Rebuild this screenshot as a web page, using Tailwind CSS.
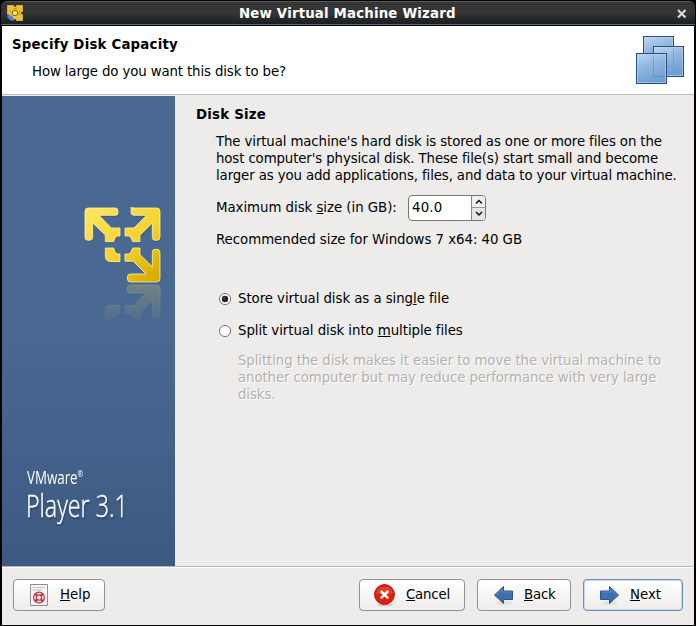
<!DOCTYPE html>
<html lang="en">
<head>
<meta charset="utf-8">
<title>New Virtual Machine Wizard</title>
<script src="https://cdn.jsdelivr.net/npm/@tailwindcss/browser@4"></script>
</head>
<body class="bg-black overflow-hidden">
<div class="w-[696px] h-[626px] bg-black flex flex-col font-['DejaVu_Sans',sans-serif] text-[13.33px] leading-[17px] text-black overflow-hidden whitespace-nowrap">
  <header class="h-[26px] shrink-0 mx-px border-t border-black pb-px">
    <div class="h-[24px] rounded-t-[6px] border-t border-t-[#585858] border-b border-b-[#536a7c] bg-linear-to-b from-[#353535] from-50% to-[#1b1d20] flex items-center pl-[6px] pr-[8px]">
      <svg class="w-4 h-4 shrink-0" viewBox="0 0 16 16">
        <path d="M.5 7h7v8.500h-4l-3-3z" fill="#4e83bd"/>
        <path d="M.5.5h6v1.500h3v-1.500h6v6h-1.500v3h1.500v6h-6v-1.500h-2l-1-2-3-2-1.500-1h-1.500z" fill="#f0c425" stroke="#ffe56b" stroke-width=".5"/>
        <path d="M2.500 5.500l2 2M6 2.500l1.500 1.500h1L10 2.500M13.500 6l-1.500 1.500v1l1.500 1.500" fill="none" stroke="#8f7422" stroke-width=".8"/>
        <rect x="5.500" y="5.500" width="5" height="5" rx="1.500" fill="#ffe458" stroke="#7d692b"/>
      </svg>
      <h1 class="text-white font-bold ml-[216px] tracking-[.18px]">New Virtual Machine Wizard</h1>
      <svg class="w-[10px] h-[10px] shrink-0 mt-[2px] ml-auto" viewBox="0 0 10 10"><path d="M1 1l7.500 7.500M8.500 1l-7.500 7.500" stroke="#d7d7d7" stroke-width="2.200"/></svg>
    </div>
  </header>
  <main class="ml-[2px] mr-[2px] h-[599px] bg-[#edeceb] flex flex-col">
    <section class="h-[69px] shrink-0 bg-white border-b border-[#bdbbb9] flex justify-between">
      <div class="pl-[10px] pt-[10px]">
        <h2 class="font-bold tracking-[.2px]">Specify Disk Capacity</h2>
        <p class="pl-5 pt-[10px] tracking-[-.13px]">How large do you want this disk to be?</p>
      </div>
      <svg class="w-[50px] h-[50px] mt-[9px] mr-[9px]" viewBox="0 0 50 50">
        <defs><linearGradient id="tile" x1="0" y1="0" x2=".35" y2="1"><stop stop-color="#c3d8f2"/><stop offset=".45" stop-color="#94b8e2"/><stop offset="1" stop-color="#709fd1"/></linearGradient></defs>
        <rect x="8.500" y="1.500" width="30" height="30" fill="url(#tile)" stroke="#294f80"/>
        <path d="M9.500 31V2.500h28v28h-28" fill="none" stroke="#bdd4ef" stroke-opacity=".6"/>
        <rect x="18.500" y="11.500" width="30" height="30" fill="url(#tile)" stroke="#294f80"/>
        <path d="M19.500 31.500h19v-19" fill="none" stroke="#6f98c8" stroke-opacity=".6"/>
        <path d="M19.500 12.500h28v28h-28z" fill="none" stroke="#bdd4ef" stroke-opacity=".6"/>
        <rect x="1.500" y="18.500" width="30" height="30" fill="url(#tile)" stroke="#294f80"/>
        <path d="M2.500 19.500h28v28h-28z" fill="none" stroke="#bdd4ef" stroke-opacity=".6"/>
        <path d="M18.500 20v21.500h12" fill="none" stroke="#5c89bd" stroke-opacity=".6"/>
      </svg>
    </section>
    <section class="h-[472px] shrink-0 pt-px border-b border-[#b9b7b5] flex">
      <aside class="w-[173px] h-[470px] shrink-0 bg-linear-to-b from-[#4a6992] from-50% to-[#3c5981] flex flex-col">
        <svg class="w-[100px] h-[130px] mt-[99px] ml-[68px] shrink-0" viewBox="0 0 300 390">
          <defs>
            <linearGradient id="gold" gradientUnits="userSpaceOnUse" x1="70" y1="40" x2="240" y2="260"><stop stop-color="#ffe45d"/><stop offset=".55" stop-color="#f7d32d"/><stop offset="1" stop-color="#d9aa00"/></linearGradient>
            <linearGradient id="fade" gradientUnits="userSpaceOnUse" x1="0" y1="265" x2="0" y2="375"><stop stop-color="#fff" stop-opacity=".42"/><stop offset="1" stop-color="#fff" stop-opacity=".08"/></linearGradient>
            <mask id="mirror" maskUnits="userSpaceOnUse" x="0" y="265" width="300" height="110"><rect y="265" width="300" height="110" fill="url(#fade)"/></mask>
            <g id="logo">
              <path d="M54 39h83q7 0 7 9v6q0 7-7 7H87l37 38h26v24h-9q-8 6-10 17h-25v-20L68 84v43q0 9-9 9h-5q-9 0-9-9V49q0-10 9-10z"/>
              <path d="M180 39h80q10 0 10 10v78q0 9-9 9h-5q-9 0-9-9V84l-37 37v19h-22q-3-11-10-17h-13v-24h27l38-38h-38q-9 0-9-9v-4q0-9 8-9z" transform="translate(0 0)"/>
              <path d="M106 159h25q2 13 10 18h9v23h-29q-15-2-15-16z"/>
              <path d="M165 177h13q8-8 10-18h22v20l37 36v-43q0-9 9-9h5q9 0 9 9v79q0 10-10 10h-78q-10 0-10-10v-5q0-9 10-9h46l-38-38h-25z"/>
            </g>
          </defs>
          <use href="#logo" fill="#344c69" opacity=".55" transform="translate(2 4)"/>
          <use href="#logo" fill="url(#gold)" stroke="#fff3a0" stroke-width="2.500"/>
          <g mask="url(#mirror)"><use href="#logo" transform="matrix(1 0 0 -1 0 531)" fill="#a8aa69" stroke="#cccf98" stroke-width="2.500"/></g>
        </svg>
        <div class="mt-[142px] ml-[25px] text-white font-['Open_Sans','Noto_Sans',sans-serif]">
          <div class="origin-left scale-x-[.74] text-[18px] leading-[20px] w-40 flex"><span>VMware</span><span class="text-[9px] leading-[14px]">®</span></div>
          <div class="origin-left scale-x-[.75] text-[31px] leading-[32px] mt-[2px] -ml-px w-40 font-light [-webkit-text-stroke:.4px_white] [text-shadow:1px_2px_2px_#29415f]">Player 3.1</div>
        </div>
      </aside>
      <div class="pl-[21px] pt-[10px]">
        <h3 class="font-bold tracking-[.22px]">Disk Size</h3>
        <div class="pl-5">
          <p class="mt-[10px] tracking-[-.12px]">The virtual machine's hard disk is stored as one or more files on the<br>host computer's physical disk. These file(s) start small and become<br>larger as you add applications, files, and data to your virtual machine.</p>
          <div class="mt-[10px] h-[27px] flex items-end">
            <label class="w-[192px] pb-[5px] tracking-[-.04px]">Maximum disk <u>s</u>ize (in GB):</label>
            <div class="w-[78px] h-[26px] rounded-[4px] border border-[#777572] bg-white flex overflow-hidden">
              <span class="w-[62px] pl-[3px] pt-[3px] tracking-[.2px]">40.0</span>
              <span class="w-[14px] border-l border-[#8b8986] bg-[#f2f1f0] flex flex-col">
                <span class="h-[12px] border-b border-[#9c9a97] flex items-center justify-center"><svg class="w-2 h-2" viewBox="0 0 8 8"><path d="M1 5.500l3-3 3 3" fill="none" stroke="#111" stroke-width="1.500"/></svg></span>
                <span class="h-[12px] bg-[#e7e5e3] flex items-center justify-center"><svg class="w-2 h-2" viewBox="0 0 8 8"><path d="M1 2l3 3 3-3" fill="none" stroke="#111" stroke-width="1.500"/></svg></span>
              </span>
            </div>
          </div>
          <p class="mt-[10px] tracking-[-.04px]">Recommended size for Windows 7 x64: 40 GB</p>
          <div class="mt-[42px] pl-[2px] h-[17px] flex items-start">
            <svg class="w-[14px] h-[14px] mr-[6px] shrink-0 mt-[2px]" viewBox="0 0 14 14"><circle cx="7" cy="7" r="5.600" fill="#fff" stroke="#777"/><circle cx="7" cy="7" r="3.200" fill="#222"/><circle cx="6" cy="6" r=".8" fill="#777"/></svg>
            <span class="tracking-[-.06px]">Store virtual disk as a sing<u>l</u>e file</span>
          </div>
          <div class="mt-[15px] pl-[2px] h-[17px] flex items-start">
            <svg class="w-[14px] h-[14px] mr-[6px] shrink-0 mt-[2px]" viewBox="0 0 14 14"><circle cx="7" cy="7" r="5.600" fill="#fff" stroke="#777"/></svg>
            <span class="tracking-[-.07px]">Split virtual disk into <u>m</u>ultiple files</span>
          </div>
          <p class="mt-[13px] ml-[22px] text-[#b3b1ae] tracking-[-.1px] [text-shadow:1px_1px_0_#fff]">Splitting the disk makes it easier to move the virtual machine to<br>another computer but may reduce performance with very large<br>disks.</p>
        </div>
      </div>
    </section>
    <footer class="grow border-t border-white pt-[11px] pl-[11px] pr-[11px] flex">
      <button class="w-[92px] h-[32px] rounded-[4px] border border-[#92908d] bg-linear-to-b from-white to-[#eeedeb] flex items-center pl-[15px]">
        <svg class="w-[20px] h-[24px] mr-[11px]" viewBox="0 0 20 24"><path d="M1.500 1.500h17v21h-17z" fill="#f4f4f2" stroke="#8d8f8a"/><path d="M4 4.500h12M4 7h9" stroke="#c2c3c0"/><circle cx="10" cy="14.500" r="4.200" fill="none" stroke="#eee5e4" stroke-width="3"/><circle cx="10" cy="14.500" r="5.400" fill="none" stroke="#c9303f" stroke-width="1.200"/><circle cx="10" cy="14.500" r="2.600" fill="#fff" stroke="#c9303f" stroke-width="1.200"/><path d="M6 10.500l2 2M14 10.500l-2 2M6 18.500l2-2M14 18.500l-2-2" stroke="#c9303f" stroke-width="2.400"/></svg>
        <span class="-mt-px"><u>H</u>elp</span>
      </button>
      <button class="ml-auto w-[106px] h-[32px] rounded-[4px] border border-[#92908d] bg-linear-to-b from-white to-[#eeedeb] flex items-center pl-[13px]">
        <svg class="w-[24px] h-[24px] mr-[9px]" viewBox="0 0 24 24"><ellipse cx="12" cy="22" rx="8" ry="1.500" fill="#d0cecb"/><circle cx="11.500" cy="11.500" r="9.900" fill="#df1e0e" stroke="#ad0d08"/><path d="M3 10a8.800 8.800 0 0 1 17 0q-8 4-17 0z" fill="#ef5845" opacity=".5"/><path d="M7.800 8l7.400 7.400M15.200 8l-7.400 7.400" stroke="#fff" stroke-width="2.500"/></svg>
        <span class="-mt-px tracking-[-.2px]"><u>C</u>ancel</span>
      </button>
      <button class="ml-[12px] w-[94px] h-[32px] rounded-[4px] border border-[#92908d] bg-linear-to-b from-white to-[#eeedeb] flex items-center pl-[14px]">
        <svg class="w-[24px] h-[24px] mr-[8px]" viewBox="0 0 24 24"><ellipse cx="12" cy="20" rx="8" ry="2" fill="#e4e2e0"/><path d="M2.500 12l9-8.500v4.500h9v8.500h-9v4z" fill="#3e70b0" stroke="#28548b"/><path d="M4 12l6.500-6v3h9" fill="none" stroke="#6d97cb" stroke-opacity=".7"/></svg>
        <span class="-mt-px tracking-[-.2px]"><u>B</u>ack</span>
      </button>
      <button class="ml-[12px] w-[100px] h-[32px] rounded-[4px] border border-[#6f8db9] bg-linear-to-b from-white to-[#eeedeb] shadow-[inset_0_0_0_1px_#c9d8ee] flex items-center pl-[14px]">
        <svg class="w-[24px] h-[24px] mr-[8px]" viewBox="0 0 24 24"><ellipse cx="12" cy="20" rx="8" ry="2" fill="#e4e2e0"/><path d="M20.500 12l-9-8.500v4.500h-9v8.500h9v4z" fill="#3e70b0" stroke="#28548b"/><path d="M19 12l-6.500-6v3h-9" fill="none" stroke="#6d97cb" stroke-opacity=".7"/></svg>
        <span class="-mt-px"><u>N</u>ext</span>
      </button>
    </footer>
  </main>
</div>
</body>
</html>
